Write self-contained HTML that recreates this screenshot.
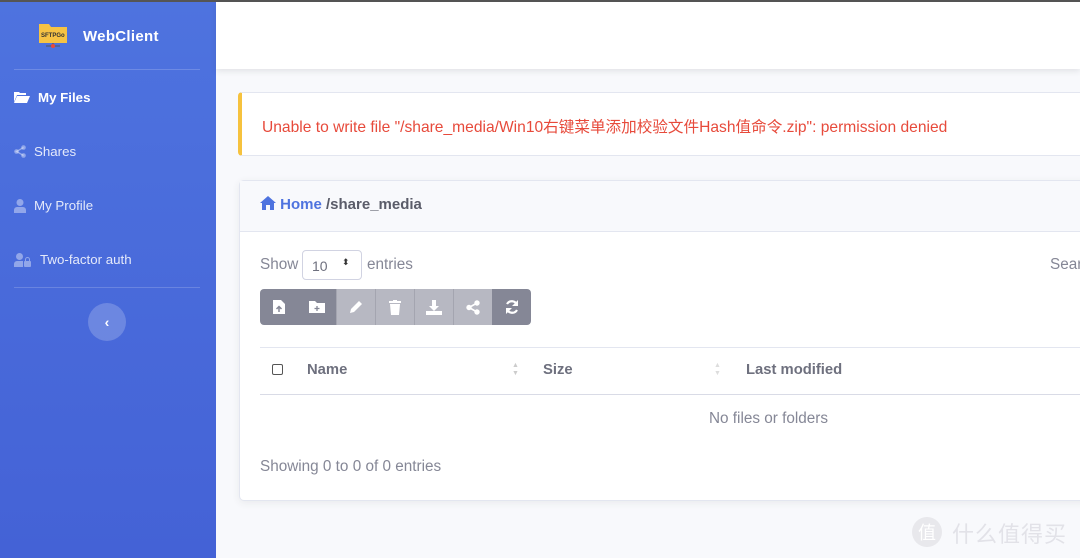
<!DOCTYPE html>
<html><head><meta charset="utf-8"><style>
*{box-sizing:border-box;margin:0;padding:0}
body{width:1080px;height:558px;overflow:hidden;background:#f8f9fc;font-family:"Liberation Sans","Noto Sans CJK SC",sans-serif;position:relative}
.topline{position:absolute;left:0;top:0;width:1080px;height:2px;background:#555}
.side{position:absolute;left:0;top:2px;width:216px;height:556px;background:linear-gradient(180deg,#4e73df 0%,#4462d6 100%)}
.brand{position:absolute;left:83px;top:26px;color:#fff;font-weight:bold;font-size:15px;letter-spacing:.3px}
.hr{position:absolute;left:14px;width:186px;height:1px;background:rgba(255,255,255,.18)}
.nav{position:absolute;left:14px;color:rgba(255,255,255,.85);font-size:13.3px;display:flex;align-items:center}
.nav svg{margin-right:8px}
.nav.act{color:#fff;font-weight:bold}
.tog{position:absolute;left:88px;top:301px;width:38px;height:38px;border-radius:50%;background:rgba(255,255,255,.2);color:#fff;font-weight:bold;text-align:center;line-height:38px;font-size:14px}
.top{position:absolute;left:216px;top:2px;right:0;height:67px;background:#fff;box-shadow:0 2px 6px rgba(58,59,69,.12)}
.alert{position:absolute;left:238px;top:92px;width:860px;height:64px;background:#fff;border:1px solid #e3e6f0;border-left:4px solid #f6c23e;border-radius:4px;color:#e74a3b;font-size:15.6px;padding:22px 0 0 20px}
.card{position:absolute;left:239px;top:180px;width:860px;height:321px;background:#fff;border:1px solid #e3e6f0;border-radius:5px;box-shadow:0 2px 8px rgba(58,59,69,.08)}
.ch{height:51px;background:#f8f9fc;border-bottom:1px solid #e3e6f0;padding:15px 0 0 20px;font-size:15px;color:#5a5c69;font-weight:bold}
.ch b{color:#4e73df}
.t{position:absolute;color:#858796;font-size:15.3px}
.sel{position:absolute;left:62px;top:69px;width:60px;height:30px;border:1px solid #d1d3e2;border-radius:4px;font-size:14px;color:#6e707e;padding:7px 0 0 9px}
.btns{position:absolute;left:20px;top:108px;height:36px;display:flex;border-radius:4px;overflow:hidden}
.btns div{height:36px;display:flex;align-items:center;justify-content:center}
.d{background:#858796;width:38px}
.l{background:#b7b8c2;width:39px;border-left:1px solid #a4a5b0}
.hl{position:absolute;left:20px;width:840px;height:1px;background:#e3e6f0}
.th{position:absolute;top:181px;font-size:14.8px;font-weight:bold;color:#6e707e}
</style></head><body>
<div class="topline"></div>
<div class="side">
 <svg style="position:absolute;left:38px;top:19px" width="30" height="28" viewBox="0 0 30 28"><path d="M1 3h10l2 3h16v16H1z" fill="#f6c344"/><text x="3" y="16" font-size="6" font-weight="bold" fill="#333" font-family="Liberation Sans">SFTPGo</text><line x1="15" y1="22" x2="15" y2="26" stroke="#555"/><line x1="8" y1="25" x2="22" y2="25" stroke="#555"/><circle cx="15" cy="25" r="2" fill="#e74a3b"/></svg>
 <div class="brand">WebClient</div>
 <div class="hr" style="top:67px"></div>
 <div class="nav act" style="top:88px"><svg width="16" height="13" viewBox="0 0 16 13"><path d="M0 1h5l1 1h6v2H3L0 11z M3 5h13l-3 7H0z" fill="#fff"/></svg>My Files</div>
 <div class="nav" style="top:142px"><svg width="12" height="13" viewBox="0 0 12 13"><circle cx="9.5" cy="2.5" r="2.3" fill="rgba(255,255,255,.4)"/><circle cx="2.5" cy="6.5" r="2.3" fill="rgba(255,255,255,.4)"/><circle cx="9.5" cy="10.5" r="2.3" fill="rgba(255,255,255,.4)"/><path d="M9.5 2.5L2.5 6.5L9.5 10.5" stroke="rgba(255,255,255,.4)" fill="none" stroke-width="1.3"/></svg>Shares</div>
 <div class="nav" style="top:196px"><svg width="12" height="14" viewBox="0 0 12 14"><circle cx="6" cy="3.5" r="3.5" fill="rgba(255,255,255,.4)"/><path d="M0 14v-3a3 3 0 013-3h6a3 3 0 013 3v3z" fill="rgba(255,255,255,.4)"/></svg>My Profile</div>
 <div class="nav" style="top:250px"><svg width="18" height="14" viewBox="0 0 18 14"><circle cx="5.5" cy="3.5" r="3.5" fill="rgba(255,255,255,.4)"/><path d="M0 14v-3a3 3 0 013-3h6v6z" fill="rgba(255,255,255,.4)"/><rect x="10" y="8" width="7" height="6" rx="1" fill="rgba(255,255,255,.4)"/><path d="M11.5 8V6.5a2 2 0 014 0V8" stroke="rgba(255,255,255,.4)" fill="none"/></svg>Two-factor auth</div>
 <div class="hr" style="top:285px"></div>
 <div class="tog">‹</div>
</div>
<div class="top"></div>
<div class="alert">Unable to write file "/share_media/Win10右键菜单添加校验文件Hash值命令.zip": permission denied</div>
<div class="card">
 <div class="ch"><b><svg width="16" height="14" viewBox="0 0 16 14" style="vertical-align:-1px"><path d="M8 0L0 7h2v7h4V9h4v5h4V7h2z" fill="#4e73df"/></svg> Home</b> /share_media</div>
 <div class="t" style="left:20px;top:75px">Show</div>
 <div class="sel">10 <span style="position:absolute;left:39px;top:6px;font-size:9px;color:#333">⬍</span></div>
 <div class="t" style="left:127px;top:75px">entries</div>
 <div class="t" style="left:810px;top:75px">Sear</div>
 <div class="btns">
  <div class="d"><svg width="12" height="14"><path d="M0 0h8l4 4v10H0z" fill="#fff"/><path d="M6 12V7M3.5 9L6 6.5 8.5 9" stroke="#858796" stroke-width="1.5" fill="none"/></svg></div>
  <div class="d"><svg width="16" height="12"><path d="M0 0h6l2 2h8v10H0z" fill="#fff"/><path d="M8 5v5M5.5 7.5h5" stroke="#858796" stroke-width="1.3"/></svg></div>
  <div class="l"><svg width="16" height="16"><path d="M2 14l1-4 8-8 3 3-8 8z" fill="#fff"/></svg></div>
  <div class="l"><svg width="12" height="15"><rect x="0" y="1" width="12" height="2" fill="#fff"/><rect x="4" y="0" width="4" height="2" fill="#fff"/><path d="M1 4h10l-1 11H2z" fill="#fff"/></svg></div>
  <div class="l"><svg width="16" height="15"><path d="M6 0h4v6h3l-5 5-5-5h3z" fill="#fff"/><rect x="0" y="11" width="16" height="4" fill="#fff"/></svg></div>
  <div class="l"><svg width="14" height="15"><circle cx="11" cy="3" r="2.7" fill="#fff"/><circle cx="3" cy="7.5" r="2.7" fill="#fff"/><circle cx="11" cy="12" r="2.7" fill="#fff"/><path d="M11 3L3 7.5 11 12" stroke="#fff" stroke-width="1.6" fill="none"/></svg></div>
  <div class="d" style="width:39px"><svg width="16" height="16" viewBox="0 0 16 16"><path d="M13 6A5.5 5.5 0 003 5M3 10a5.5 5.5 0 0010 1" stroke="#fff" stroke-width="2.2" fill="none"/><path d="M14 1v6H8zM2 15V9h6z" fill="#fff"/></svg></div>
 </div>
 <div class="hl" style="top:166px"></div>
 <div style="position:absolute;left:32px;top:183px;width:11px;height:11px;border:1px solid #555;border-radius:2px"></div>
 <div class="th" style="left:67px">Name</div>
 <div style="position:absolute;left:272px;top:181px;font-size:7px;color:#ccc;line-height:8px">▲<br>▼</div>
 <div class="th" style="left:303px">Size</div>
 <div style="position:absolute;left:474px;top:181px;font-size:7px;color:#ddd;line-height:8px">▲<br>▼</div>
 <div class="th" style="left:506px">Last modified</div>
 <div class="hl" style="top:213px;background:#d9dbe6"></div>
 <div class="t" style="left:469px;top:229px">No files or folders</div>
 <div class="t" style="left:20px;top:277px">Showing 0 to 0 of 0 entries</div>
</div>
<div style="position:absolute;left:912px;top:517px;width:30px;height:30px;border-radius:50%;background:#e8e8ec;color:#fff;font-size:18px;text-align:center;line-height:30px;font-family:'Noto Sans CJK SC',sans-serif">值</div>
<div style="position:absolute;left:952px;top:517px;font-size:22px;color:#e2e2e8;font-family:'Noto Sans CJK SC',sans-serif;letter-spacing:1px">什么值得买</div>
</body></html>
